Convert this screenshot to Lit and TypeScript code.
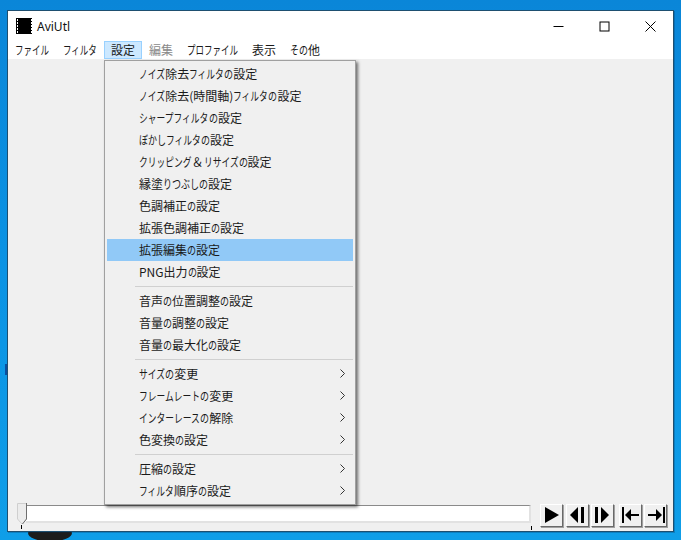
import { LitElement, html, css, svg, nothing } from "lit";
import { customElement } from "lit/decorators.js";

type Entry = { t: string; sub?: boolean; hi?: boolean } | null;

const ENTRIES: Entry[] = [
  { t: "ノイズ除去フィルタの設定" },
  { t: "ノイズ除去(時間軸)フィルタの設定" },
  { t: "シャープフィルタの設定" },
  { t: "ぼかしフィルタの設定" },
  { t: "クリッピング＆リサイズの設定" },
  { t: "縁塗りつぶしの設定" },
  { t: "色調補正の設定" },
  { t: "拡張色調補正の設定" },
  { t: "拡張編集の設定", hi: true },
  { t: "PNG出力の設定" },
  null,
  { t: "音声の位置調整の設定" },
  { t: "音量の調整の設定" },
  { t: "音量の最大化の設定" },
  null,
  { t: "サイズの変更", sub: true },
  { t: "フレームレートの変更", sub: true },
  { t: "インターレースの解除", sub: true },
  { t: "色変換の設定", sub: true },
  null,
  { t: "圧縮の設定", sub: true },
  { t: "フィルタ順序の設定", sub: true },
];

const MENUS = [
  { t: "ファイル" },
  { t: "フィルタ" },
  { t: "設定", active: true },
  { t: "編集", disabled: true },
  { t: "プロファイル" },
  { t: "表示" },
  { t: "その他" },
];

const TRANSPORT = [
  svg`<path d="M4 2 L18 10 L4 18 Z" fill="#000"/>`,
  svg`<path d="M11 2 L3 10 L11 18 Z" fill="#000"/><rect x="14" y="2" width="3" height="16" fill="#000"/>`,
  svg`<rect x="3" y="2" width="3" height="16" fill="#000"/><path d="M9 2 L17 10 L9 18 Z" fill="#000"/>`,
  svg`<rect x="2" y="2" width="2" height="16" fill="#000"/><path d="M11 4 L5 10 L11 16 Z" fill="#000"/><rect x="10" y="9" width="9" height="2" fill="#000"/>`,
  svg`<rect x="18" y="2" width="2" height="16" fill="#000"/><path d="M11 4 L17 10 L11 16 Z" fill="#000"/><rect x="3" y="9" width="9" height="2" fill="#000"/>`,
];

// The reference's UI font has condensed kana; reproduce that by squeezing kana runs horizontally.
function kanaText(text: string, kataWidth = 8.5) {
  return text.split(/([\u30A0-\u30FF]+|[\u3040-\u309F]+)/).map((part) => {
    if (!part) return nothing;
    const kata = /^[\u30A0-\u30FF]/.test(part);
    const hira = /^[\u3040-\u309F]/.test(part);
    if (!kata && !hira) return part;
    const w = kata ? kataWidth : 9;
    return html`<span class="kana" style="width:${part.length * w}px;transform:scaleX(${w / 12})">${part}</span>`;
  });
}

@customElement("app-root")
export class AppRoot extends LitElement {
  static styles = css`
    :host {
      display: block;
      position: relative;
      width: 681px;
      height: 540px;
      overflow: hidden;
      box-sizing: border-box;
      padding: 10px 7px 8px 7px;
      background: linear-gradient(180deg, #0a86d8 0%, #0b93e4 50%, #0f9ee8 100%);
      font-family: "Noto Sans CJK JP", "Noto Sans", sans-serif;
      font-size: 12px;
      color: #1a1a1a;
    }
    .kana {
      display: inline-block;
      white-space: nowrap;
      transform-origin: left center;
    }
    .blob {
      position: absolute;
      left: 28px;
      top: 531px;
      width: 44px;
      height: 10px;
      background: #1c1c1c;
      border-radius: 40% 40% 50% 50% / 20% 20% 100% 100%;
    }
    .edge {
      position: absolute;
      left: 5px;
      top: 364px;
      width: 2px;
      height: 11px;
      background: #0a4fa0;
    }
    .window {
      position: relative;
      height: 100%;
      box-sizing: border-box;
      border: 1px solid #1e4f70;
      display: flex;
      flex-direction: column;
      background: #fff;
      box-shadow: 1px 1px 0 rgba(0, 40, 80, 0.25);
    }
    .title {
      height: 30px;
      display: flex;
      align-items: center;
      padding-left: 8px;
      flex: none;
    }
    .app-icon { display: block; margin-right: 5px; }
    .title-text {
      font-family: "Noto Sans", sans-serif;
      font-size: 12px;
      color: #111;
      flex: 1;
    }
    .caps { display: flex; height: 30px; }
    .cap {
      width: 46px;
      display: flex;
      align-items: center;
      justify-content: center;
    }
    .menubar {
      height: 18px;
      display: flex;
      align-items: stretch;
      flex: none;
    }
    .mi {
      display: flex;
      align-items: center;
      padding: 0 6px;
      box-sizing: border-box;
      border: 1px solid transparent;
      white-space: nowrap;
      line-height: 1;
    }
    .mi.active { background: #cce8ff; border-color: #99d1ff; }
    .mi.disabled { color: #8a8a8a; }
    .client {
      flex: 1;
      background: #f0f0f0;
      display: flex;
      align-items: flex-end;
      padding: 0 6px 0 9px;
      gap: 9px;
    }
    .slider {
      flex: 1;
      height: 30px;
      position: relative;
    }
    .track {
      position: absolute;
      left: 9px;
      right: 0;
      top: 4px;
      height: 18px;
      box-sizing: border-box;
      background: #fff;
      border-top: 1px solid #8a8a8a;
      border-bottom: 2px solid #e2e2e2;
      border-right: 2px solid #e2e2e2;
    }
    .thumb { position: absolute; left: 0; top: 0; display: block; }
    .tick {
      position: absolute;
      top: 24px;
      width: 1px;
      height: 4px;
      background: #000;
    }
    .tick.a { left: 4px; }
    .tick.b { right: -1px; top: 25px; }
    .transport { display: flex; align-items: flex-start; gap: 2px; padding-bottom: 4px; }
    .btn {
      width: 23px;
      height: 23px;
      box-sizing: border-box;
      background: #f0f0f0;
      border-top: 1px solid #fff;
      border-left: 1px solid #fff;
      border-right: 1px solid #696969;
      border-bottom: 1px solid #696969;
      box-shadow: 1px 1px 0 #a0a0a0;
      display: flex;
      align-items: center;
      justify-content: center;
    }
    .btn.wide { margin-left: 3px; }
    .btn.first { margin-right: 1px; }
    .menu {
      position: absolute;
      left: 96px;
      top: 49px;
      width: 252px;
      box-sizing: border-box;
      padding: 2px;
      background: #f0f0f0;
      border: 1px solid #a0a0a0;
      box-shadow: 2px 2px 3px rgba(0, 0, 0, 0.55);
    }
    .row {
      height: 22px;
      box-sizing: border-box;
      display: flex;
      align-items: center;
      padding: 0 8px 1px 32px;
      white-space: nowrap;
    }
    .row.hi { background: #91c9f7; }
    .label { flex: 1; line-height: 1; }
    .arrow { display: block; }
    .sep {
      height: 7px;
      display: flex;
      align-items: center;
      padding-left: 28px;
    }
    .sep::after {
      content: "";
      display: block;
      flex: 1;
      height: 1px;
      background: #d0d0d0;
    }
  `;

  private appIcon() {
    return html`<svg class="app-icon" width="16" height="16" viewBox="0 0 16 16" shape-rendering="crispEdges">
      <rect x="0" y="0" width="16" height="16" fill="#000"/>
      ${[1, 4, 7, 10, 13].map(
        (y) => svg`<rect x="0.5" y=${y} width="1" height="1.5" fill="#fff"/><rect x="14.5" y=${y} width="1" height="1.5" fill="#fff"/>`
      )}
    </svg>`;
  }

  private caps() {
    return html`<div class="caps">
      <div class="cap"><svg width="11" height="11" viewBox="0 0 11 11"><rect x="0.5" y="5" width="10" height="1" fill="#000"/></svg></div>
      <div class="cap"><svg width="11" height="11" viewBox="0 0 11 11"><rect x="1" y="1" width="9" height="9" fill="none" stroke="#000"/></svg></div>
      <div class="cap"><svg width="11" height="11" viewBox="0 0 11 11"><path d="M0.5 0.5 L10.5 10.5 M10.5 0.5 L0.5 10.5" stroke="#000" fill="none"/></svg></div>
    </div>`;
  }

  render() {
    return html`
      <div class="blob"></div>
      <div class="edge"></div>
      <div class="window">
        <div class="title">
          ${this.appIcon()}
          <div class="title-text">AviUtl</div>
          ${this.caps()}
        </div>
        <div class="menubar">
          ${MENUS.map(
            (m) => html`<div class="mi ${m.active ? "active" : ""} ${m.disabled ? "disabled" : ""}"><span>${kanaText(m.t)}</span></div>`
          )}
        </div>
        <div class="client">
          <div class="slider">
            <div class="track"></div>
            <svg class="thumb" width="10" height="25" viewBox="0 0 10 25">
              <path d="M0.5 2.5 H9.5 V18 L5 23 L0.5 18 Z" fill="#ececec" stroke="#cfcfcf"/>
              <path d="M9.5 2 V18 L5.5 23" fill="none" stroke="#6e6e6e"/>
            </svg>
            <div class="tick a"></div>
            <div class="tick b"></div>
          </div>
          <div class="transport">
            ${TRANSPORT.map(
              (p, i) => html`<div class="btn ${i === 0 ? "first" : ""} ${i === 3 ? "wide" : ""}"><svg width="21" height="21" viewBox="0 0 21 21">${p}</svg></div>`
            )}
          </div>
        </div>
        <div class="menu">
          ${ENTRIES.map((e) =>
            e
              ? html`<div class="row ${e.hi ? "hi" : ""}">
                  <span class="label">${kanaText(e.t, 8.75)}</span>
                  ${e.sub
                    ? html`<svg class="arrow" width="5" height="9" viewBox="0 0 5 9"><path d="M0.5 0.5 L4.5 4.5 L0.5 8.5" fill="none" stroke="#333"/></svg>`
                    : nothing}
                </div>`
              : html`<div class="sep"></div>`
          )}
        </div>
      </div>
    `;
  }
}
